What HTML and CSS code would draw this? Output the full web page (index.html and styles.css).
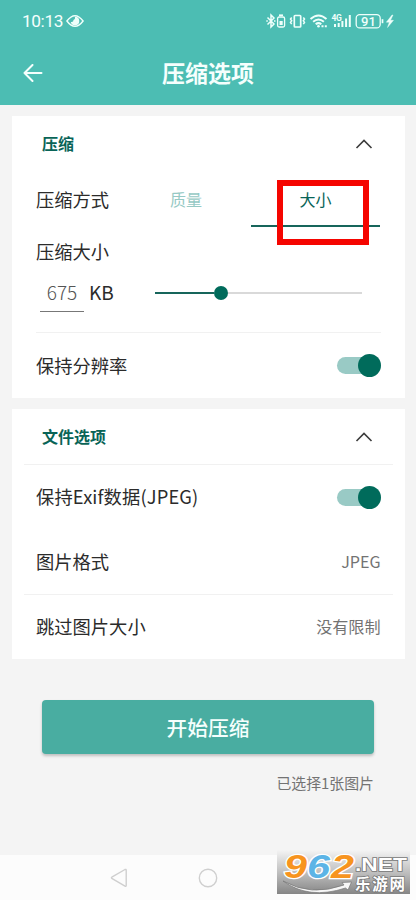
FILE: index.html
```html
<!DOCTYPE html>
<html lang="zh-CN">
<head>
<meta charset="utf-8">
<title>压缩选项</title>
<link rel="stylesheet" href="styles.css">
</head>
<body>
<div class="screen">
  <header class="top">
    <div class="status">
      <span class="clock">10:13</span>
      <svg class="eye" width="18" height="14" viewBox="0 0 18 14"><path d="M.9 7Q9-3.6 17.1 7 9 17.6.9 7Z" fill="none" stroke="#effffb" stroke-width="1.4"/><path d="M9 2.7A4.3 4.3 0 1 1 4.8 8Q7.600 8.500 7.500 6 9.500 5.500 9 2.700Z" fill="#effffb"/></svg>
      <svg class="signals" width="132" height="18" viewBox="0 0 132 18" fill="none" stroke="#effffb" stroke-width="1.3">
        <path d="M3.500 5.500 10 12 7 15V3L10 6 3.500 12.500M2.300 9h1.500M10 9h1.500" stroke-width="1.500"/>
        <rect x="13.600" y="5" width="7" height="10" rx="1.500"/><path d="M15 3.200h4" stroke-width="1.600"/><rect x="15.500" y="9" width="3.200" height="4" fill="#effffb" stroke="none"/>
        <rect x="30.300" y="3.500" width="6.400" height="11.500" rx=".8" stroke-width="1.700"/><path d="M27.700 5.500 26.500 7l1.200 1.700-1.200 1.700 1.200 1.800M39.300 5.500 40.500 7l-1.200 1.700 1.200 1.700-1.200 1.800" stroke-width="1.500"/>
        <path d="M46.500 7q8-7 16 0M49.100 9.700q5.400-4.500 10.800 0M51.700 12.300q2.800-2.300 5.600 0" stroke-width="2"/><circle cx="54.500" cy="14.300" r="1.300" fill="#effffb" stroke="none"/><path d="M57.500 14.300h2M60.800 14.300h2" stroke-width="1.900"/>
        <text x="67.500" y="8.700" class="network">4G</text>
        <path d="M71 15v-3M74.700 15v-4M78.400 15V9M82.100 15V6.500M85.800 15V3" stroke-width="2"/>
        <rect x="92.200" y="2.700" width="24" height="13.200" rx="3.500"/><path d="M118.500 7.200v4" stroke-width="1.700"/>
        <text x="97" y="13.700" class="battery">91</text>
        <path d="m128 3-5.700 7.200h3L123.500 15.500l6-7.200h-3L129 3Z" fill="#effffb" stroke="#effffb" stroke-width=".4"/>
      </svg>
    </div>
    <div class="titlebar">
      <svg class="back" width="20" height="18" viewBox="0 0 20 18"><path d="M9.500 1 1.500 9l8 8M1.500 9h17" fill="none" stroke="#f5fffd" stroke-width="2" stroke-linecap="round" stroke-linejoin="round"/></svg>
      <h1>压缩选项</h1>
    </div>
  </header>

  <main>
    <section class="card compress">
      <div class="card-head"><h2>压缩</h2><svg class="chevron" width="18" height="10" viewBox="0 0 18 10"><path d="m1.500 9 7.500-7.500L16.500 9"/></svg></div>
      <div class="method">
        <span class="label">压缩方式</span>
        <span class="tab">质量</span>
        <span class="tab active">大小<i class="highlight"></i></span>
      </div>
      <div class="size-label label">压缩大小</div>
      <div class="size-row">
        <span class="value">675</span><span class="unit">KB</span>
        <div class="slider"><span class="filled"></span><span class="knob"></span><span class="rest"></span></div>
      </div>
      <div class="row keep"><span class="label">保持分辨率</span><span class="switch"></span></div>
    </section>

    <section class="card files">
      <div class="card-head"><h2>文件选项</h2><svg class="chevron" width="18" height="10" viewBox="0 0 18 10"><path d="m1.500 9 7.500-7.500L16.500 9"/></svg></div>
      <div class="row lined"><span class="label exif">保持Exif数据(JPEG)</span><span class="switch"></span></div>
      <div class="row"><span class="label">图片格式</span><span class="setting">JPEG</span></div>
      <div class="row lined"><span class="label">跳过图片大小</span><span class="setting">没有限制</span></div>
    </section>

    <button class="start">开始压缩</button>
    <p class="selected">已选择1张图片</p>
  </main>

  <nav class="navbar">
    <svg width="18" height="20" viewBox="0 0 18 20"><path d="M15 1.500 1.800 9.200q-.8.600 0 1.200L15 18.200q1.200.5 1.200-.8V2.300q0-1.300-1.200-.8Z"/></svg>
    <svg width="20" height="20" viewBox="0 0 20 20"><circle cx="10" cy="10" r="8.700"/></svg>
  </nav>
  <svg class="watermark" width="133" height="44" viewBox="0 0 133 44">
    <defs>
      <linearGradient id="plate" x2="0" y2="1"><stop stop-color="#f4f4f4"/><stop offset=".5" stop-color="#c0c0c0"/><stop offset="1" stop-color="#858585"/></linearGradient>
    </defs>
    <rect width="133" height="44" fill="url(#plate)"/>
    <path d="M6 31Q34 47 67 35l-2-2.500 9.500-.5-3.500 8-2.500-2Q32 50 6 31Z" fill="#f7f7f7" stroke="#777" stroke-width=".7"/>
    <g class="digits">
      <text x="7" y="28" textLength="23" lengthAdjust="spacingAndGlyphs" fill="#f7941f">9</text>
      <text x="30" y="28" textLength="23" lengthAdjust="spacingAndGlyphs" fill="#5cb4e6">6</text>
      <text x="54" y="28" textLength="23" lengthAdjust="spacingAndGlyphs" fill="#f7941f">2</text>
    </g>
    <text x="78" y="21" textLength="52" lengthAdjust="spacingAndGlyphs" class="domain">.NET</text>
    <text x="78" y="39.500" textLength="50" class="brand">乐游网</text>
  </svg>
</div>
</body>
</html>
```
FILE: styles.css
```css
* { box-sizing: border-box; }
body, h1, h2, p { margin: 0; }
body {
  background: #f4f4f4;
  font-family: "Noto Sans CJK SC", sans-serif;
  color: #2b2b2b;
}
.screen {
  position: relative;
  width: 416px;
  height: 900px;
  display: flex;
  flex-direction: column;
  overflow: hidden;
}
.top { height: 105px; background: #4cbdb3; color: #f5fffd; }
.status { height: 42px; display: flex; align-items: center; padding: 0 20px 0 22px; }
.clock { font: 17.3px/20px Roboto, sans-serif; width: 44px; letter-spacing: -.4px; white-space: nowrap; }
.eye { display: block; }
.signals { margin-left: auto; }
.network { font: bold 8.5px Roboto, sans-serif; fill: #effffb; stroke: none; letter-spacing: -.4px; }
.battery { font: 500 13px Roboto, sans-serif; fill: #effffb; stroke: none; }
.titlebar {
  height: 61px;
  display: grid;
  grid-template-columns: 20px 1fr 20px;
  align-items: center;
  padding: 0 23px;
}
.titlebar h1 { font-size: 23px; line-height: 30px; font-weight: 700; text-align: center; margin-top: -2px; }
.back { display: block; }
main { flex: 1; padding: 11px 11.5px 0 12px; }
.card { background: #fff; }
.compress { height: 282px; }
.files { height: 250px; margin-top: 11px; }
.card-head { height: 55px; display: flex; align-items: center; justify-content: space-between; padding: 0 31.5px 0 30px; }
.card-head h2 { font-size: 16px; line-height: 24px; font-weight: 700; color: #096457; margin-top: -1px; }
.chevron { fill: none; stroke: #3c3c3c; stroke-width: 1.6; }
.label { font-size: 18.3px; line-height: 28px; white-space: nowrap; }
.method {
  display: grid;
  grid-template-columns: 85px 130px 129px;
  height: 56px;
  margin: 0 24px;
}
.method .label { line-height: 56px; }
.tab { position: relative; height: 56px; font-size: 16px; line-height: 56px; text-align: center; color: #96c9c4; }
.active { color: #096457; border-bottom: 2px solid #17655b; }
.highlight { position: absolute; left: 26px; top: 9px; width: 92px; height: 65px; border: 6px solid #f50500; }
.size-label { height: 50px; line-height: 48px; padding-left: 24px; }
.size-row { display: flex; height: 56px; margin: 0 24px; border-bottom: 1px solid #f1f1f1; }
.value, .unit { font-size: 19px; line-height: 30px; }
.value { width: 44px; height: 35px; margin-left: 4px; text-align: center; color: #555; font-weight: 300; border-bottom: 1px solid #777; }
.unit { width: 71px; padding-left: 5px; }
.slider { width: 207px; height: 31px; display: flex; align-items: center; }
.filled { width: 59px; height: 2px; background: #17655b; }
.knob { width: 14px; height: 14px; border-radius: 50%; background: #006b5b; }
.rest { flex: 1; height: 2px; background: #d9d9d9; }
.row { display: flex; align-items: center; justify-content: space-between; height: 65px; margin: 0 12px; padding: 0 12px; border-top: 1px solid transparent; }
.row .label, .setting { margin-top: -2px; }
.exif { letter-spacing: .14px; }
.lined { border-top-color: #f1f1f1; }
.keep { border: 0; height: 65px; }
.switch { width: 43.5px; height: 23px; display: flex; align-items: center; position: relative; }
.switch::before { content: ""; width: 38px; height: 17px; border-radius: 9px; background: #99cac5; }
.switch::after { content: ""; position: absolute; right: 0; width: 23px; height: 23px; border-radius: 50%; background: #006b5b; }
.setting { font-size: 16.1px; color: #737373; }
.start {
  display: block;
  width: 332px;
  height: 54px;
  margin: 41px 0 0 30px;
  padding: 0;
  border: 0;
  border-radius: 4px;
  background: #49ada1;
  box-shadow: 0 2px 3px rgba(0, 0, 0, .22);
  color: #f5fffd;
  font: 500 20.7px/54px "Noto Sans CJK SC", sans-serif;
}
.selected { margin: 17px 30.5px 0 0; font-size: 14.9px; line-height: 24px; text-align: right; color: #737373; }
.navbar { height: 45px; background: #fcfcfc; display: flex; align-items: center; padding-left: 110px; gap: 70px; }
.navbar svg { fill: none; stroke: #cfcfcf; stroke-width: 1.4; }
.navbar svg, .watermark { flex: none; }
.watermark { position: absolute; left: 277px; top: 850px; overflow: visible; }
.digits { font: italic bold 33px "Liberation Sans", sans-serif; stroke: #fff; stroke-width: 2.5px; paint-order: stroke; }
.domain { font: bold 18px "Liberation Sans", sans-serif; fill: #fff; stroke: #777; stroke-width: 1.5px; paint-order: stroke; }
.brand { font: bold 15.5px "Noto Sans CJK SC", sans-serif; fill: #fff; stroke: #777; stroke-width: 1.5px; paint-order: stroke; }
```
